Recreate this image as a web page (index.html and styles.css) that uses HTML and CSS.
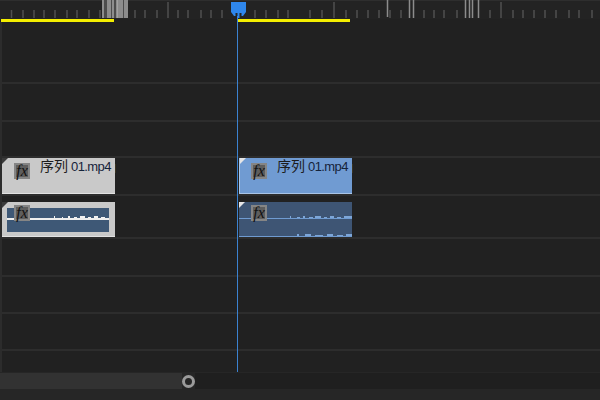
FILE: index.html
```html
<!doctype html>
<html>
<head>
<meta charset="utf-8">
<title>序列 01</title>
<link rel="stylesheet" href="styles.css">
</head>

<body>
<div class="timeline">
    <svg class="ruler" width="600" height="19" viewBox="0 0 600 19">
        <path class="edge" d="M0 .5H600"/>
        <rect class="dense-bg" x="102" y="0" width="26" height="18"/>
        <path class="tick" d="M11.500 10V18M23 10V18M34 10V18M44 10V18M55 10V18M67 10V18M77 10V18M89 10V18M100 10V18M135 10V18M145 10V18M157 10V18M178 10V18M188 10V18M201 10V18M211 10V18M222 10V18M255 10V18M266 10V18M278 10V18M288 10V18M310 10V18M322 10V18M346 10V18M357 10V18M368 10V18M379 10V18M390 10V18M401 10V18M424 10V18M434 10V18M444 10V18M457 10V18M490 10V18M513 10V18M523 10V18M534 10V18M545 10V18M556 10V18M569 10V18M579 10V18M592 10V18"/>
        <path class="tick" d="M168 2V18M334 2V18M501 2V18"/>
        <path class="bright" d="M387.500 0V17M409.500 0V18M413.500 0V18M465.500 0V18M469.500 0V18M472.500 0V18M478.500 0V18"/>
        <path class="dense" d="M103 0V18M108 0V18M110 0V18M113 0V18M117 0V18M118 0V18M120 0V18M122 0V18M125 0V18M127 0V18"/>
    </svg>
    <div class="marks">
        <span class="mark mark-a"></span>
        <span class="mark mark-b"></span>
    </div>
    <div class="tracks">
        <div class="track track-first"></div>
        <div class="track"></div>
        <div class="track track-short"></div>
        <div class="track">
            <div class="clip clip-grey">
                <i class="corner"></i>
                <b class="fx">fx</b>
                <span class="name"><em>序列</em> 01.mp4</span>
            </div>
            <div class="clip clip-blue">
                <i class="corner"></i>
                <b class="fx">fx</b>
                <span class="name"><em>序列</em> 01.mp4</span>
            </div>
        </div>
        <div class="track track-audio">
            <div class="clip clip-grey clip-audio">
                <i class="corner"></i>
                <b class="fx">fx</b>
                <div class="band"></div>
                <div class="band band-low"></div>
                <svg class="peaks" width="113" height="35" viewBox="0 0 113 35">
                    <path class="peak-white" d="M52 14h1v2h-1zM60 15h1v1h-1zM66 14h2v2h-2zM72 15h3v1h-3zM78 14h5v2h-5zM86 15h3v1h-3zM92 14h4v2h-4zM99 15h4v1h-4z"/>
                </svg>
            </div>
            <div class="clip clip-dark clip-audio">
                <i class="corner"></i>
                <b class="fx">fx</b>
                <div class="band"></div>
                <div class="band band-low"></div>
                <svg class="peaks" width="113" height="35" viewBox="0 0 113 35">
                    <path class="peak-blue" d="M51 14h1v2h-1zM58 15h3v1h-3zM64 14h2v2h-2zM70 15h4v1h-4zM76 14h6v2h-6zM85 15h3v1h-3zM91 14h4v2h-4zM98 15h4v1h-4zM105 14h8v2h-8zM58 32h2v2h-2zM66 32h6v2h-6zM76 33h8v1h-8zM88 32h6v2h-6zM98 33h6v1h-6zM107 32h6v2h-6z"/>
                </svg>
            </div>
        </div>
        <div class="track"></div>
        <div class="track track-thin"></div>
        <div class="track track-thin"></div>
        <div class="track track-last"></div>
    </div>
    <div class="scrollbar">
        <div class="scroll-fill"></div>
        <div class="scroll-knob"></div>
        <div class="scroll-rest"></div>
    </div>
    <div class="playhead"></div>
    <svg class="playhead-top" width="16" height="18" viewBox="0 0 16 18">
        <path d="M0 2H15V12L12 16H10.500V13H8.500V18H6.500V13H4.500V16H3L0 12Z"/>
    </svg>
</div>
</body>
</html>
```

FILE: styles.css
```css
* { padding: 0; margin: 0; box-sizing: border-box; }
body { background: #262626; font-family: "Liberation Sans", "Noto Sans CJK SC", sans-serif; }

.timeline { width: 600px; height: 400px; position: relative; overflow: hidden; display: flex; flex-direction: column; }

.ruler { display: block; flex: none; background: #232323; }
.ruler .edge { stroke: #2e2e2e; stroke-width: 1; fill: none; }
.ruler .dense-bg { fill: #4c4c4c; }
.ruler .tick { stroke: #505050; stroke-width: 1.500; fill: none; }
.ruler .bright { stroke: #8c8c8c; stroke-width: 1.500; fill: none; }
.ruler .dense { stroke: #a2a2a2; stroke-width: 1.500; fill: none; }

.marks { flex: none; height: 3px; display: flex; padding-left: 1px; background: #212121; }
.mark { display: block; height: 3px; background: #f4ee00; }
.mark-a { width: 113px; margin-right: 124px; }
.mark-b { width: 112px; }

.tracks { flex: none; background: #212121; border-left: 2px solid #2c2c2c; display: flex; flex-direction: column; }
.track { flex: none; height: 38px; border-bottom: 2px solid #2d2d2d; display: flex; }
.track-first { height: 62px; }
.track-short { height: 36px; }
.track-thin { height: 37px; }
.track-audio { height: 43px; padding-top: 6px; }
.track-last { height: 21px; border-bottom: none; }

.clip { height: 36px; width: 113px; position: relative; flex: none; }
.clip-blue, .clip-dark { margin-left: 124px; }
.clip-grey { background: #c9c9c9; border-bottom: 1px solid #e2e2e2; }
.clip-blue { background: #709bd2; border-left: 1px solid #a9c5e8; border-bottom: 1px solid #a9c5e8; }
.clip-dark { background: #3e5574; }
.clip-audio { height: 35px; padding: 6px 6px 0 5px; }

.corner { position: absolute; left: 0; top: 0; width: 0; height: 0; border-style: solid; border-width: 6px 6px 0 0; border-color: #3a3a3a transparent transparent transparent; }
.clip-blue .corner, .clip-dark .corner { border-top-color: #e6e6e6; }

.fx { position: absolute; left: 12px; top: 5px; width: 16px; height: 16px; background: #5e5e5e; border: 2px solid #858585; font: italic 16px/11px "Liberation Serif", serif; color: #111; text-align: center; }
.clip-audio .fx { top: 3px; z-index: 1; }
.clip-blue .fx { left: 11px; }

.name { position: absolute; left: 38px; top: 0; font-size: 13px; letter-spacing: -0.6px; line-height: 17px; color: #15233a; white-space: nowrap; }
.name em { font-style: normal; font-size: 14px; letter-spacing: 0; color: #1c1c1c; }
.clip-blue .name { left: 37px; }
.name::after { content: ""; position: absolute; left: 75px; top: 6px; width: 1px; height: 9px; background: #3a3320; }

.band { height: 10px; background: #3e5876; box-shadow: 0 2px 0 #eee; }
.band-low { height: 12px; margin-top: 2px; box-shadow: none; }
.clip-dark.clip-audio { padding: 6px 0 0; }
.clip-dark .band { background: transparent; box-shadow: none; height: 11px; border-bottom: 1px solid #6f9bd1; }
.clip-dark .band-low { height: 18px; margin-top: 0; }

.peaks { position: absolute; left: 0; top: 0; }
.peak-white { fill: #f2f2f2; }
.peak-blue { fill: #7da6d8; }

.scrollbar { flex: none; height: 16px; margin-top: 1px; display: flex; align-items: center; }
.scroll-fill { width: 182px; height: 16px; background: #323232; }
.scroll-knob { width: 13px; height: 13px; flex: none; border: 3px solid #9b9b9b; border-radius: 50%; background: #262626; }
.scroll-rest { flex: 1; height: 16px; background: #1f1f1f; }

.playhead { position: absolute; left: 237px; top: 16px; width: 1px; height: 356px; background: #3b82d0; }
.playhead-top { position: absolute; left: 231px; top: 0; fill: #2f87ec; }
```
